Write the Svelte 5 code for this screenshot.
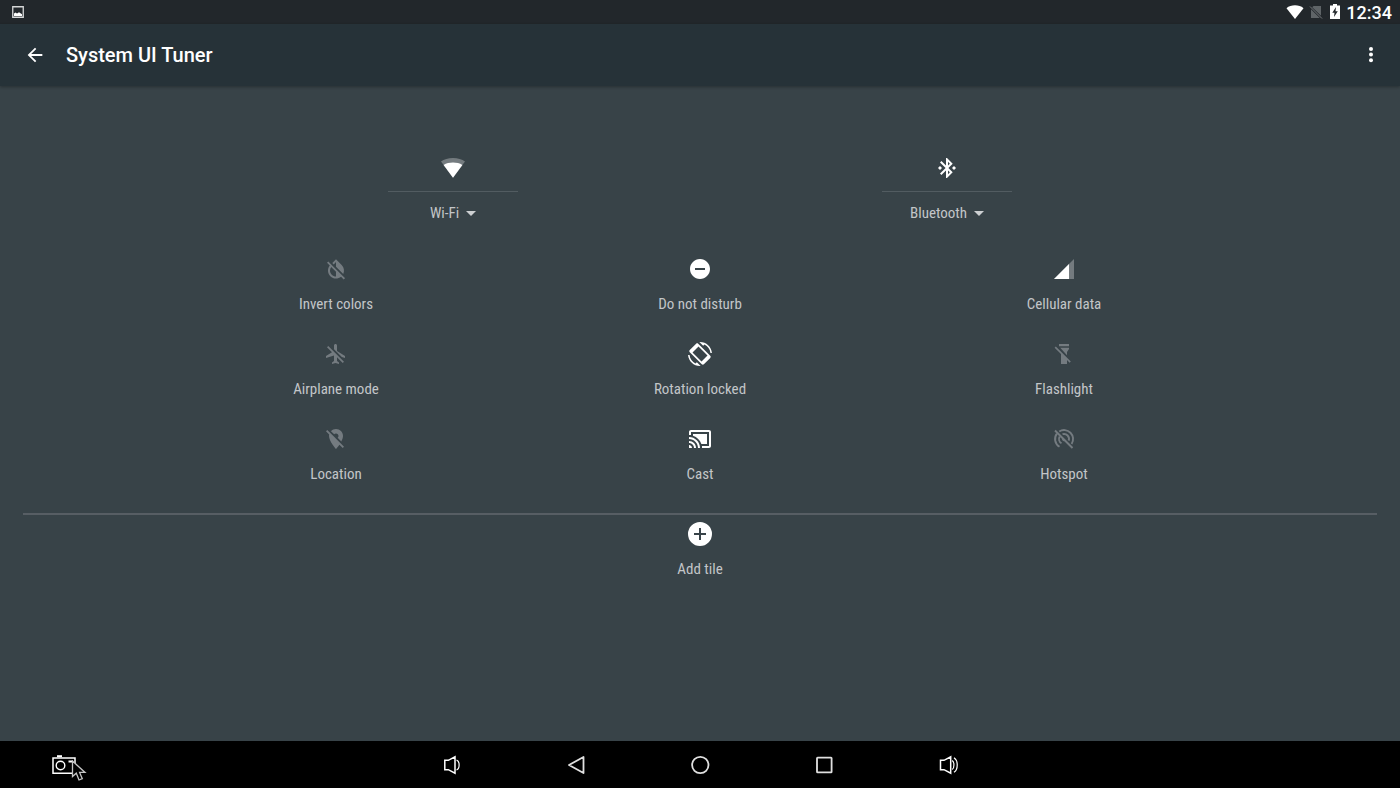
<script>
  const wideTiles = [
    { label: 'Wi-Fi', icon: 'wifi' },
    { label: 'Bluetooth', icon: 'bluetooth' }
  ];
  const rows = [
    [
      { label: 'Invert colors', icon: 'invert', off: true },
      { label: 'Do not disturb', icon: 'dnd' },
      { label: 'Cellular data', icon: 'cell' }
    ],
    [
      { label: 'Airplane mode', icon: 'airplane', off: true },
      { label: 'Rotation locked', icon: 'rotation' },
      { label: 'Flashlight', icon: 'flashlight', off: true }
    ],
    [
      { label: 'Location', icon: 'location', off: true },
      { label: 'Cast', icon: 'cast' },
      { label: 'Hotspot', icon: 'hotspot', off: true }
    ]
  ];
</script>

{#snippet icon(name)}
  <svg class="icon" width="24" height="24" viewBox="0 0 24 24" fill="currentColor" aria-hidden="true">
    {#if name === 'wifi'}
      <path opacity=".3" d="M12 21.8 24 5.6C21 3.3 16.8 2 12 2S3 3.3 0 5.6z" />
      <path d="M12 21.8 21.4 9C18.7 7.4 15.5 6.6 12 6.6S5.300 7.400 2.600 9z" />
    {:else if name === 'bluetooth'}
      <path d="M7 12l-2-2-2 2 2 2 2-2zm10.710-4.290L12 2h-1v7.590L6.410 5 5 6.410 10.590 12 5 17.590 6.410 19 11 14.410V22h1l5.710-5.710-4.300-4.290 4.300-4.290zM13 5.830l1.880 1.880L13 9.590V5.830zm1.880 10.460L13 18.170v-3.760l1.880 1.880zM19 10l-2 2 2 2 2-2-2-2z" />
    {:else if name === 'invert'}
      <path d="M20.650 20.870l-2.350-2.350-6.300-6.290-3.560-3.570-1.420-1.410L4.270 4.500 3 5.770l2.780 2.780c-2.550 3.140-2.360 7.760.56 10.690C7.900 20.800 9.950 21.580 12 21.580c1.790 0 3.570-.59 5.030-1.780l2.700 2.700L21 21.230l-.35-.36zM12 19.590c-1.600 0-3.110-.62-4.240-1.760C6.620 16.690 6 15.190 6 13.590c0-1.320.43-2.570 1.210-3.600L12 14.770v4.820zM12 5.100v4.580l7.250 7.260c1.370-2.960.84-6.570-1.600-9.010L12 2.270l-3.700 3.700 1.410 1.410L12 5.100z" />
    {:else if name === 'dnd'}
      <path d="M12 2C6.480 2 2 6.480 2 12s4.480 10 10 10 10-4.480 10-10S17.520 2 12 2zm5 11H7v-2h10v2z" />
    {:else if name === 'cell'}
      <path opacity=".3" d="M2 22h20V2z" />
      <path d="M17 7 2 22h15z" />
    {:else if name === 'airplane'}
      <path d="M13 9V3.500c0-.83-.67-1.500-1.500-1.500S10 2.670 10 3.500v3.680l7.830 7.830L21 16v-2l-8-5zM3 5.270l4.990 4.990L2 14v2l8-2.500V19l-2 1.500V22l3.500-1 3.500 1v-1.500L13 19v-3.730L18.730 21 20 19.730 4.270 4 3 5.270z" />
    {:else if name === 'rotation'}
      <path d="M16.480 2.520c3.270 1.550 5.610 4.720 5.970 8.480h1.500C23.440 4.840 18.290 0 12 0l-.66.03 3.810 3.810 1.330-1.320zm-6.250-.77c-.59-.59-1.540-.59-2.120 0L1.750 8.110c-.59.59-.59 1.540 0 2.120l12.020 12.020c.59.59 1.540.59 2.120 0l6.360-6.360c.59-.59.59-1.540 0-2.120L10.230 1.750zM13.500 19.500 4.500 10.500l6-6 9 9zM7.520 21.480C4.250 19.940 1.910 16.760 1.550 13H.05C.56 19.160 5.710 24 12 24l.66-.03-3.810-3.810-1.330 1.320z" />
    {:else if name === 'flashlight'}
      <path d="M7 2h10v2.200H7zM8.200 5.800H17V7l-2 3v3.200zM3.800 4.500 2.600 5.700 9 12.100V22h6v-3.900l2.600 2.600 1.200-1.200z" />
    {:else if name === 'location'}
      <path d="M12 6.500c1.380 0 2.500 1.120 2.500 2.500 0 .74-.33 1.390-.83 1.850l3.630 3.630c.98-1.860 1.700-3.800 1.700-5.480 0-3.870-3.130-7-7-7-1.980 0-3.760.83-5.040 2.150l3.190 3.190c.46-.52 1.110-.84 1.850-.84zm4.370 9.600l-4.630-4.630-.11-.11L3.270 3 2 4.270l3.180 3.180C5.070 7.950 5 8.470 5 9c0 5.250 7 13 7 13s1.670-1.850 3.380-4.350L18.730 21 20 19.730l-3.630-3.630z" />
    {:else if name === 'cast'}
      <path d="M1 18v3h3c0-1.660-1.340-3-3-3zm0-4v2c2.760 0 5 2.240 5 5h2c0-3.870-3.130-7-7-7zm18-7H5v1.630c3.960 1.280 7.090 4.410 8.370 8.370H19V7zM1 10v2c4.970 0 9 4.030 9 9h2c0-6.080-4.930-11-11-11zm20-7H3c-1.100 0-2 .9-2 2v3h2V5h18v14h-7v2h7c1.100 0 2-.9 2-2V5c0-1.100-.9-2-2-2z" />
    {:else if name === 'hotspot'}
      <g fill="none" stroke="currentColor" stroke-width="1.900">
        <path d="M3 3.500 20.500 21" />
        <path d="M7.200 4.500A9 9 0 0 1 19.600 17M4.900 6.600A9 9 0 0 0 7.500 19.800" />
        <path d="M10.500 7.200A5 5 0 0 1 16.700 13.700M7.700 9.500A5 5 0 0 0 9.500 16.300" />
      </g>
      <path d="M10.300 11.200a2 2 0 0 0 2.500 2.800z" />
    {:else if name === 'add'}
      <path d="M12 0a12 12 0 1 0 0 24 12 12 0 0 0 0-24zm6 13h-5v5h-2v-5H6v-2h5V6h2v5h5z" />
    {/if}
  </svg>
{/snippet}

<div class="screen">
  <div class="status">
    <svg width="12" height="12" viewBox="0 0 12 12" aria-hidden="true">
      <path d="M.75.75h10.500v10.500H.75z" fill="none" stroke="#d5d7d8" stroke-width="1.300" />
      <path d="M2 10V7.500l1.500-1 1.500 1L7 6.200l3 2V10z" fill="#fff" />
    </svg>
    <div class="signals">
      <svg width="18" height="14" viewBox="0 0 18 14" aria-hidden="true">
        <path d="M9 14 17.500 3.200C15.200 1.200 12.300.3 9 .3S2.800 1.200.5 3.200z" fill="#fff" />
      </svg>
      <svg class="sim" width="14" height="14" viewBox="0 0 14 14" aria-hidden="true">
        <path d="M4.500 1H12v9.800L3.200 2.300zM2 4.200 10.800 13H2z" fill="#5f6467" />
        <path d="m1 1.500 12 12" stroke="#777b7e" stroke-width="1" />
      </svg>
      <svg class="battery" width="10" height="15" viewBox="0 0 10 15" aria-hidden="true">
        <path d="M3 0h4v1.500h3V15H0V1.500h3z" fill="#fff" />
        <path d="M6 3 2.300 8.800h2.200L4 13l3.800-5.800H5.500z" fill="#22272b" />
      </svg>
      <span class="clock">12:34</span>
    </div>
  </div>

  <header>
    <button class="bar-button" aria-label="Back">
      <svg width="22" height="22" viewBox="0 0 24 24" aria-hidden="true">
        <path fill="#fff" d="M20 11H7.830l5.590-5.590L12 4l-8 8 8 8 1.410-1.410L7.830 13H20z" />
      </svg>
    </button>
    <h1>System UI Tuner</h1>
    <button class="bar-button more" aria-label="More options">
      <svg width="24" height="24" viewBox="0 0 24 24" fill="#fff" aria-hidden="true">
        <circle cx="12" cy="6" r="2" /><circle cx="12" cy="11.600" r="2" /><circle cx="12" cy="17.200" r="2" />
      </svg>
    </button>
  </header>

  <main>
    <div class="row wide">
      {#each wideTiles as tile}
        <div class="wide-tile">
          <button class="toggle" aria-label={tile.label}>{@render icon(tile.icon)}</button>
          <button class="detail">
            {tile.label}
            <svg width="10" height="5" viewBox="0 0 10 5" aria-hidden="true"><path d="M0 0h10L5 5z" fill="#cdd0d2" /></svg>
          </button>
        </div>
      {/each}
    </div>
    {#each rows as row}
      <div class="row">
        {#each row as tile}
          <button class="tile" class:off={tile.off}>
            {@render icon(tile.icon)}
            <span>{tile.label}</span>
          </button>
        {/each}
      </div>
    {/each}
    <div class="add">
      <button class="tile">
        {@render icon('add')}
        <span>Add tile</span>
      </button>
    </div>
  </main>

  <nav>
    <button class="camera" aria-label="Screenshot">
      <svg width="24" height="20" viewBox="0 0 24 20" fill="none" stroke="#fff" aria-hidden="true">
        <path d="M1 3h22v15.300H1z" stroke-width="1.500" />
        <path d="M5 1.200h5" stroke-width="2" />
        <circle cx="8.500" cy="10.500" r="4.300" stroke-width="1.400" />
        <path d="M16.500 6.500h4" stroke-width="2" />
      </svg>
    </button>
    <div class="keys">
      <button aria-label="Volume down">
        <svg width="20" height="20" viewBox="0 0 20 20" fill="none" stroke="#fff" aria-hidden="true">
          <path d="M2.800 5.300h3.500L13 1.800v16.400l-6.700-3.500H2.800z" stroke-width="1.500" />
          <path d="M14.500 5c3.500 1.200 3.500 8.800 0 10" stroke-width="1.200" />
        </svg>
      </button>
      <button aria-label="Back">
        <svg width="20" height="20" viewBox="0 0 20 20" fill="none" stroke="#e0e0e0" stroke-width="1.800" stroke-linejoin="round" aria-hidden="true">
          <path d="M17.500 2v16L3 10z" />
        </svg>
      </button>
      <button aria-label="Home">
        <svg width="20" height="20" viewBox="0 0 20 20" fill="none" stroke="#e0e0e0" stroke-width="1.800" aria-hidden="true">
          <circle cx="10.300" cy="10" r="8.200" />
        </svg>
      </button>
      <button aria-label="Recent apps">
        <svg width="20" height="20" viewBox="0 0 20 20" fill="none" stroke="#e0e0e0" stroke-width="1.800" aria-hidden="true">
          <rect x="3" y="2.700" width="14.600" height="14.600" rx=".6" />
        </svg>
      </button>
      <button aria-label="Volume up">
        <svg width="20" height="20" viewBox="0 0 20 20" fill="none" stroke="#fff" aria-hidden="true">
          <path d="M2.500 5.300h3.500L12.700 1.800v16.400L6 14.700H2.500z" stroke-width="1.500" />
          <path d="M14.200 5.500c2.300 1.500 2.300 7.500 0 9M16 2.700c4.300 2.800 4.300 11.800 0 14.600" stroke-width="1.200" />
        </svg>
      </button>
    </div>
    <svg class="pointer" width="16" height="22" viewBox="0 0 16 22" aria-hidden="true">
      <path d="M1.500 1v15.500L5.300 13.200 8 20l3.300-1.300-2.700-6.300H14z" fill="#000" stroke="#c4c4c4" stroke-width="1.300" />
    </svg>
  </nav>
</div>

<style>
  :global(body) {
    margin: 0;
    background: #384348;
  }
  .screen {
    min-height: 100vh;
    display: flex;
    flex-direction: column;
    background: #384348;
    color: #fff;
    font-family: Roboto, sans-serif;
  }
  button {
    margin: 0;
    padding: 0;
    border: 0;
    background: none;
    color: inherit;
    font: inherit;
    cursor: pointer;
  }
  svg {
    display: block;
    flex: none;
  }
  .status {
    height: 24px;
    padding: 0 8px 0 12px;
    display: flex;
    align-items: center;
    justify-content: space-between;
    background: #22272b;
  }
  .signals {
    display: flex;
    align-items: center;
  }
  .signals svg {
    margin-bottom: 1px;
  }
  .signals .sim {
    margin-left: 5px;
    margin-right: 7px;
  }
  .signals .battery {
    margin-right: 6px;
  }
  .clock {
    font-size: 18px;
    font-weight: 500;
    line-height: 24px;
    padding-top: 2px;
  }
  header {
    height: 62px;
    padding: 0 17px 0 24px;
    display: flex;
    align-items: center;
    background: #263238;
    box-shadow: 0 1px 3px rgba(0, 0, 0, 0.3);
  }
  h1 {
    margin: 0 0 0 20px;
    font-size: 20px;
    line-height: 24px;
    font-weight: 500;
  }
  .more {
    margin-left: auto;
  }
  main {
    flex: 1;
    padding: 70px 24px 24px;
    font-family: "Roboto Condensed", Roboto, sans-serif;
    font-size: 15px;
    line-height: 20px;
    color: #c3c6c8;
  }
  .row {
    display: flex;
    justify-content: space-evenly;
    padding-bottom: 28px;
  }
  .wide {
    padding-bottom: 34px;
  }
  .wide-tile {
    width: 130px;
    display: flex;
    flex-direction: column;
    align-items: center;
  }
  .toggle {
    width: 100%;
    padding-bottom: 11px;
    border-bottom: 1px solid #525c61;
    display: flex;
    justify-content: center;
  }
  .detail {
    margin-top: 11px;
    display: flex;
    align-items: center;
    gap: 7px;
  }
  .icon {
    color: #fff;
  }
  .off .icon {
    color: #747b80;
  }
  .tile {
    width: 104px;
    display: flex;
    flex-direction: column;
    align-items: center;
    gap: 13px;
    white-space: nowrap;
  }
  .add {
    display: flex;
    justify-content: center;
    margin: 1px -1px 0;
    padding-top: 7px;
    border-top: 2px solid #575e64;
  }
  nav {
    position: relative;
    height: 47px;
    display: grid;
    grid-template-columns: 1fr auto 1fr;
    align-items: center;
    background: #000;
  }
  .camera {
    justify-self: start;
    margin-left: 52px;
  }
  .keys {
    display: flex;
  }
  .keys button {
    width: 124px;
    height: 47px;
    display: flex;
    align-items: center;
    justify-content: center;
  }
  .pointer {
    position: absolute;
    left: 71px;
    top: 19px;
  }
</style>
